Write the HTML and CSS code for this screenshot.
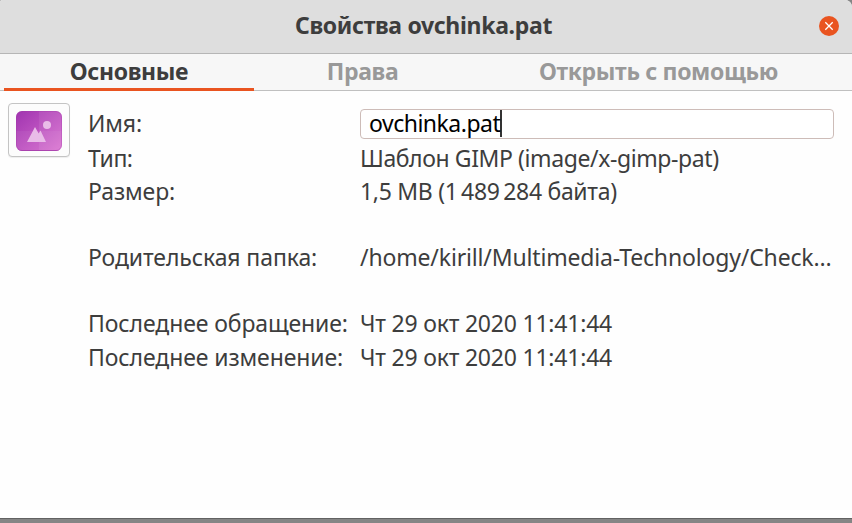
FILE: index.html
```html
<!DOCTYPE html>
<html lang="ru">
<head>
<meta charset="utf-8">
<title>Свойства ovchinka.pat</title>
<link rel="stylesheet" href="styles.css">
</head>
<body>
<div class="window">
  <header class="titlebar">
    <h1 class="title">Свойства ovchinka.pat</h1>
    <button class="close" aria-label="Закрыть">
      <svg viewBox="0 0 20 20" width="20" height="20"><circle cx="10" cy="10" r="10" fill="#e95420"/><path d="M6.300 6.300l7.400 7.400M13.700 6.300l-7.400 7.400" stroke="#fff" stroke-width="1.300"/></svg>
    </button>
  </header>
  <nav class="tabs">
    <div class="tab active">Основные</div>
    <div class="tab">Права</div>
    <div class="tab">Открыть с помощью</div>
  </nav>
  <main class="content">
    <div class="icon-button">
      <svg viewBox="0 0 46 40" width="46" height="40">
        <defs>
          <linearGradient id="g" x1="0" y1="0" x2="1" y2="1"><stop offset="0" stop-color="#a034b0"/><stop offset="1" stop-color="#d970d0"/></linearGradient>
          <clipPath id="c"><rect width="46" height="40" rx="6"/></clipPath>
        </defs>
        <g clip-path="url(#c)">
          <rect width="46" height="40" fill="url(#g)"/>
          <rect x="23" width="23" height="40" fill="#fff" opacity=".07"/>
          <rect y="20" width="46" height="20" fill="#fff" opacity=".05"/>
          <rect y="39" width="46" height="1" fill="#a23aa8" opacity=".7"/>
        </g>
        <rect x=".5" y=".5" width="45" height="39" rx="5.5" fill="none" stroke="#a23aa8" stroke-opacity=".35"/>
        <circle cx="31" cy="14" r="4" fill="#e9bce8"/>
        <path d="M11 31L19 16l3.700 6.500 1.800-3L30 31z" fill="#e9bce8"/>
      </svg>
    </div>
    <dl class="props">
      <dt>Имя:</dt><dd class="entry"><span class="entry-text">ovchinka.pat</span></dd>
      <dt class="type-label">Тип:</dt><dd class="type">Шаблон GIMP (image/x-gimp-pat)</dd>
      <dt>Размер:</dt><dd class="size">1,5 MB (1&#8201;489&#8201;284 байта)</dd>
      <dt class="spaced">Родительская папка:</dt><dd class="spaced path">/home/kirill/Multimedia-Technology/Check…</dd>
      <dt class="spaced">Последнее обращение:</dt><dd class="spaced date">Чт 29 окт 2020 11:41:44</dd>
      <dt class="last">Последнее изменение:</dt><dd class="last date">Чт 29 окт 2020 11:41:44</dd>
    </dl>
  </main>
</div>
</body>
</html>
```
FILE: styles.css
```css
* { box-sizing: border-box; }
body {
  margin: 0;
  height: 523px;
  overflow: hidden;
  background: #858585;
  color: #3d3d3d;
  font: 23px/33px "Noto Sans", sans-serif;
}
.window {
  height: 519px;
  display: flex;
  flex-direction: column;
  background: #fefefe;
  border-bottom: 1px solid #626262;
  border-radius: 2px 7px 0 0;
  overflow: hidden;
}
.titlebar {
  height: 54px;
  flex: none;
  display: grid;
  grid-template-columns: 33px 1fr 33px;
  align-items: start;
  background: #dedede;
  border-bottom: 1px solid #b6b6b6;
}
.title {
  grid-column: 2;
  margin: 0;
  padding-right: 5px;
  text-align: center;
  font-size: 23px;
  font-weight: 700;
  line-height: 50px;
  letter-spacing: -.32px;
}
.close {
  width: 20px;
  height: 20px;
  margin-top: 16px;
  padding: 0;
  border: 0;
  background: none;
}
.close svg { display: block; }
.tabs {
  height: 37px;
  flex: none;
  display: grid;
  grid-template-columns: 250px 217px 375px;
  padding-left: 4px;
  background: linear-gradient(#f7f7f7 36px, #c0c0c0 36px);
}
.tab {
  height: 37px;
  text-align: center;
  font-weight: 700;
  line-height: 34px;
  letter-spacing: -.35px;
  color: #999;
}
.active {
  color: #3d3d3d;
  border-bottom: 3px solid #e95420;
}
.content {
  display: flex;
  align-items: flex-start;
  padding: 12px 18px 0 8px;
}
.icon-button {
  width: 62px;
  height: 54px;
  flex: none;
  display: flex;
  align-items: center;
  justify-content: center;
  padding-top: 2px;
  border: 1px solid #c4c4c4;
  border-radius: 4px;
  background: #fcfcfc;
  box-shadow: 0 1px 1px #0001;
}
.props {
  flex: 1;
  display: grid;
  grid-template-columns: 272px 474px;
  margin: 4px 0 0 18px;
  white-space: nowrap;
}
.props dt, .props dd { margin: 0; }
.props dt { letter-spacing: -.1px; }
.props .spaced { margin-top: 33px; }
.props .last { padding-top: 1px; }
.props .entry {
  height: 30px;
  margin: 2px 0 3px;
  padding-left: 8px;
  border: 1px solid #cdbcb8;
  border-radius: 4px;
  background: #fff;
  color: #000;
  line-height: 27px;
  letter-spacing: -.5px;
}
.entry-text {
  display: inline-block;
  height: 27px;
  border-right: 2px solid #333;
}
.props .type-label { letter-spacing: -.5px; }
.type { letter-spacing: -.4px; }
.size { letter-spacing: -.3px; }
.path { letter-spacing: -.16px; }
.date { letter-spacing: -.21px; }
```
